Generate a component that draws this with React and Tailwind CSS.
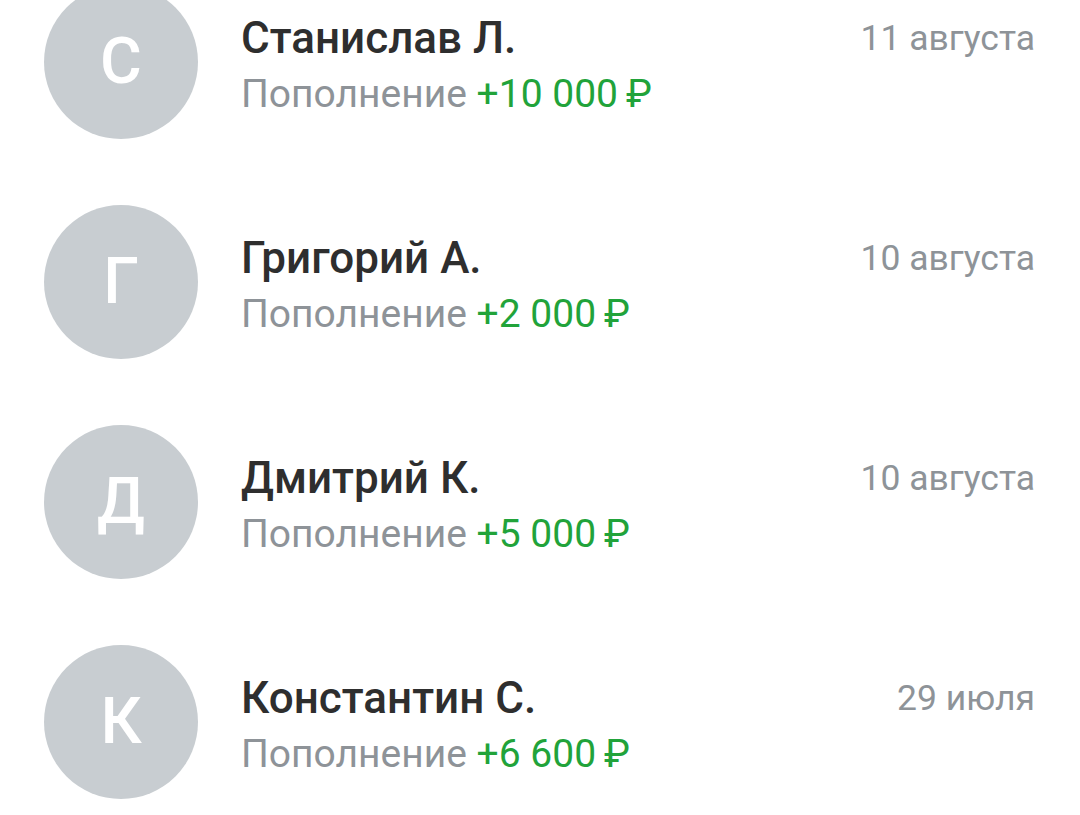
const operations = [
  { letter: 'С', name: 'Станислав Л.', amount: '+10 000\u2009₽', date: '11 августа' },
  { letter: 'Г', name: 'Григорий А.', amount: '+2 000\u2009₽', date: '10 августа' },
  { letter: 'Д', name: 'Дмитрий К.', amount: '+5 000\u2009₽', date: '10 августа' },
  { letter: 'К', name: 'Константин С.', amount: '+6 600\u2009₽', date: '29 июля' },
];

function OperationRow({ op }) {
  return (
    <div className="h-[220px] flex items-center pl-[44px] pr-[45px]">
      {/* Avatar */}
      <div className="w-[154px] h-[154px] rounded-full bg-[#c8cdd1] flex items-center justify-center shrink-0">
        <span className="text-white text-[64px] leading-none font-medium">{op.letter}</span>
      </div>

      {/* Text */}
      <div className="flex-1 flex justify-between items-start ml-[43px] mt-[5px]">
        <div className="flex flex-col">
          <span className="text-[44px] leading-[52px] font-medium text-[#2e2e2e]">{op.name}</span>
          <span className="text-[39px] leading-[46px] mt-[7px] text-[#8e9398]">
            Пополнение <span className="text-[#21a33a]">{op.amount}</span>
          </span>
        </div>
        <span className="text-[35.5px] leading-[44px] text-[#8e9398] mt-[4px]">{op.date}</span>
      </div>
    </div>
  );
}

export default function App() {
  return (
    <div className="w-[1080px] h-[815px] overflow-hidden bg-white font-['Roboto',sans-serif]">
      <div className="-mt-[48px]">
        {operations.map((op) => (
          <OperationRow key={op.name} op={op} />
        ))}
      </div>
    </div>
  );
}
